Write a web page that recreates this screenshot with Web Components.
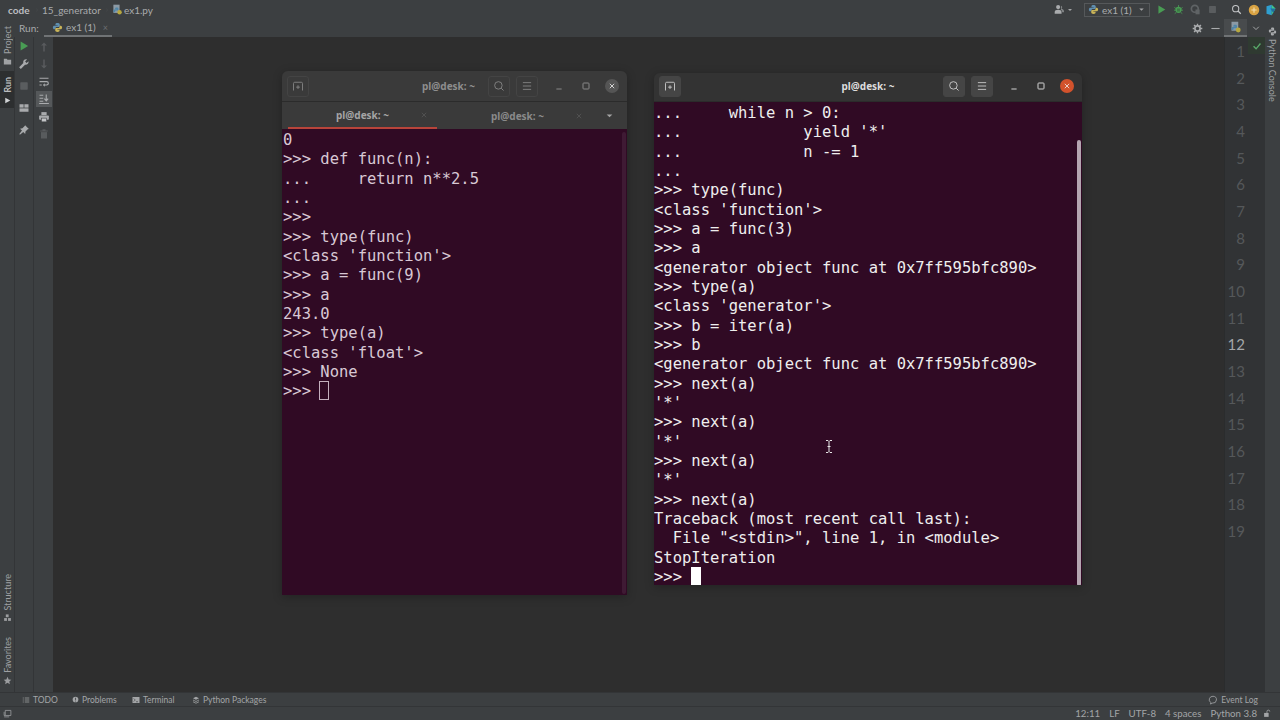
<!DOCTYPE html>
<html>
<head>
<meta charset="utf-8">
<title>code - ex1.py</title>
<style>
  html, body { margin: 0; width: 1280px; height: 720px; overflow: hidden; background: #2e2e2e; }
</style>
</head>
<body>
<ide-app></ide-app>

<script>
const ICONS = {
  python: `<path d="M8 1.500c-2.400 0-3 .9-3 2v1.300h3.200v.6H3.400C2.200 5.400 1.300 6.400 1.300 8s.9 2.700 2 2.700H5V9.200c0-1 .9-1.900 2-1.900h2.700c1 0 1.600-.8 1.600-1.700V3.500c0-1.200-1.300-2-3.300-2z" fill="#5f8fb0"/><path d="M8 14.500c2.400 0 3-.9 3-2v-1.300H7.800v-.6h4.800c1.200 0 2.100-1 2.100-2.600s-.9-2.700-2-2.700H11v1.500c0 1-.9 1.900-2 1.900H6.300c-1 0-1.600.8-1.600 1.700v2.100c0 1.200 1.300 2 3.300 2z" fill="#c9b458"/>`,
  pyfile: `<rect x="2" y="1" width="9" height="12" fill="#8c9aa5"/><path d="M7 5c-2 0-2.500.7-2.500 1.500v1H7v.5H3.500C2.500 8 2 8.800 2 10s.5 2 1.500 2h1v-1.200c0-.8.7-1.300 1.500-1.300h2c.8 0 1.300-.6 1.300-1.300V6.500C9.300 5.500 8.500 5 7 5z" fill="#4f86a8"/><circle cx="11" cy="12" r="3.200" fill="#b7a83f"/>`,
  play: `<path d="M3.500 2v12l10-6z" fill="#499c54"/>`,
  bug: `<circle cx="8" cy="8.500" r="4.500" fill="#499c54"/><path d="M8 1.500v3M2 5l3 2M14 5l-3 2M1.500 9h3M14.500 9h-3M2.500 14l2.500-2M13.500 14l-2.500-2" stroke="#499c54" stroke-width="1.200"/><path d="M5.800 7.500h4.400M5.800 10h4.400" stroke="#2f4a33" stroke-width="1"/>`,
  cover: `<circle cx="7" cy="7" r="5" fill="none" stroke="#5f6365" stroke-width="2.500"/><rect x="8" y="8" width="6" height="7" fill="#5f6365"/>`,
  stop: `<rect x="3" y="3" width="10" height="10" rx="1" fill="#5a5d5f"/>`,
  search: `<circle cx="6.800" cy="6.800" r="4.500" fill="none" stroke="#c5c7c9" stroke-width="1.500"/><path d="M10.200 10.200l4 4" stroke="#c5c7c9" stroke-width="1.800"/>`,
  update: `<circle cx="8" cy="8" r="7" fill="#d9a343"/><path d="M8 4.500v7M4.500 8h7" stroke="#f3dfb0" stroke-width="1.500"/>`,
  toolbox: `<path d="M2 3l7-2v14l-7-2z" fill="#2f9fd0"/><path d="M9 1l5 5-5 9z" fill="#3fc98c"/><path d="M7 6l7 0-3 6z" fill="#1f6f9f"/>`,
  user: `<circle cx="6" cy="4.500" r="3" fill="#a9abad"/><path d="M1 14v-2.500c0-2 2-3 5-3s5 1 5 3V14z" fill="#a9abad"/><path d="M10.500 2.500a2.500 2.500 0 010 4.500c2 .4 4 1.300 4 3.500V12H12c0-1.500-.6-2.600-2-3.500z" fill="#85888a"/>`,
  caret: `<path d="M4 6l4 4 4-4z" fill="#a3a5a7"/>`,
  sep: `<path d="M6 2l4 6-4 6" stroke="#55585a" stroke-width="1" fill="none"/>`,
  wrench: `<path d="M14 4.200l-2.600 2.300-1.900-1.900L12 2c-2-.8-4.500.3-5 2.500-.2.800-.1 1.500.1 2.100L1.500 12.200l2.300 2.300 5.600-5.600c2.500.7 5.300-1.500 4.600-4.700z" fill="#a9abad"/>`,
  layout: `<rect x="2" y="3" width="5.500" height="4.500" fill="#a9abad"/><rect x="8.500" y="3" width="5.500" height="4.500" fill="#a9abad"/><rect x="2" y="8.500" width="12" height="4.500" fill="#a9abad"/>`,
  pin: `<path d="M9.500 1.500l5 5-1.500.6-3 3-.4 3.200-2.600-2.600L3 14l-1 0 0-1 3.300-4.200L2.700 6.200 5.900 5.800l3-3z" fill="#a9abad"/>`,
  up: `<path d="M8 2l-4 4h3v8h2V6h3z" fill="#585b5d"/>`,
  down: `<path d="M8 14l-4-4h3V2h2v8h3z" fill="#585b5d"/>`,
  wrap: `<path d="M2 3h12M2 7.500h9.500a2.200 2.200 0 010 4.500H8M2 12h3" stroke="#a9abad" stroke-width="1.500" fill="none"/><path d="M9 9.800L6.500 12 9 14.200z" fill="#a9abad"/>`,
  scroll: `<path d="M2 3h5M2 7h5M2 11h5M1.500 14h13" stroke="#a9abad" stroke-width="1.500"/><path d="M11 2v8M8.500 7.500L11 10.500l2.500-3" stroke="#a9abad" stroke-width="1.500" fill="none"/>`,
  print: `<rect x="4.500" y="1.500" width="7" height="4" fill="#a9abad"/><rect x="1.500" y="6" width="13" height="5.500" rx="1" fill="#a9abad"/><rect x="4.500" y="9.500" width="7" height="5" fill="#c2c4c6" stroke="#3c3f41" stroke-width=".8"/>`,
  trash: `<path d="M3 4h10M6 2.500h4" stroke="#585b5d" stroke-width="1.500"/><path d="M4 5.500h8V14H4z" fill="#585b5d"/>`,
  gear: `<circle cx="8" cy="8" r="3.800" fill="none" stroke="#a9abad" stroke-width="2.400"/><path d="M8 1v2.500M8 12.500V15M1 8h2.500M12.500 8H15M3 3l1.800 1.800M11.200 11.200L13 13M13 3l-1.800 1.800M4.800 11.200L3 13" stroke="#a9abad" stroke-width="2"/>`,
  minus: `<path d="M2 8h12" stroke="#a9abad" stroke-width="1.600"/>`,
  chevron: `<path d="M3.500 6L8 10.500 12.500 6" stroke="#a3a5a7" stroke-width="1.600" fill="none"/>`,
  check: `<path d="M2.500 8.500L6.500 12.500 13.500 4" stroke="#59a869" stroke-width="2.200" fill="none"/>`,
  folder: `<path d="M1.500 3h5l1.500 2h6.500v8.500h-13z" fill="#a0a2a4"/>`,
  run: `<path d="M4 3v10l9-5z" fill="#d0d2d4"/>`,
  structure: `<rect x="5" y="2.500" width="5" height="5" fill="#9c9ea0"/><rect x="2" y="9" width="5" height="5" fill="#9c9ea0"/><rect x="9" y="9" width="5" height="5" fill="#9c9ea0"/>`,
  star: `<path d="M8 1.500l2 4.500 4.800.5-3.600 3.200 1 4.800L8 12.100l-4.200 2.400 1-4.800L1.200 6.500 6 6z" fill="#9c9ea0"/>`,
  todo: `<path d="M5.500 4h9M5.500 8h9M5.500 12h9" stroke="#a3a5a7" stroke-width="1.500"/><path d="M1.500 4h2M1.500 8h2M1.500 12h2" stroke="#a3a5a7" stroke-width="1.500"/>`,
  problems: `<circle cx="8" cy="8" r="6.500" fill="#a3a5a7"/><path d="M8 4v5M8 10.500v2" stroke="#3c3f41" stroke-width="1.800"/>`,
  terminal: `<rect x="1" y="2" width="14" height="12" fill="#a3a5a7"/><path d="M3.500 5l3 3-3 3M8 11.500h4" stroke="#3c3f41" stroke-width="1.300" fill="none"/>`,
  packages: `<path d="M8 1.500l6 3-6 3-6-3z" fill="#a3a5a7"/><path d="M2 8l6 3 6-3M2 11.500l6 3 6-3" stroke="#a3a5a7" stroke-width="1.500" fill="none"/>`,
  console: `<path d="M8 1c-2 0-2.500.8-2.500 1.700v1.100H8v.5H3.700C2.500 4.300 1.500 5.200 1.500 7s1 2.700 2 2.700H5V8.500c0-.9.800-1.700 1.800-1.700h2.500c.9 0 1.600-.7 1.600-1.500V2.700C10.900 1.700 9.800 1 8 1zM8 15c2 0 2.500-.8 2.500-1.700v-1.100H8v-.5h4.300c1.200 0 2.200-.9 2.200-2.700s-1-2.700-2-2.700H11v1.200c0 .9-.8 1.700-1.800 1.700H6.700c-.9 0-1.600.7-1.600 1.500v2.600C5.100 14.300 6.200 15 8 15z" fill="#a9abad"/>`,
  balloon: `<path d="M8 2a6 5.500 0 00-3.500 10l-.5 2.500 3-1.500A6 5.500 0 108 2z" fill="none" stroke="#a3a5a7" stroke-width="1.300"/>`,
  stripe: `<path d="M4 2.500h10v9H4zM4 11.500H2V5" fill="none" stroke="#a3a5a7" stroke-width="1.300"/><path d="M2 14h9" stroke="#a3a5a7" stroke-width="1.300"/>`,
  lock: `<rect x="2" y="7" width="8" height="7" fill="#a3a5a7"/><path d="M7 7V4.500a2.500 2.500 0 015 0" stroke="#a3a5a7" stroke-width="1.500" fill="none"/>`,
  newtab: `<path d="M2 14V4.500c0-.8.500-1.500 1.500-1.500h9c1 0 1.500.7 1.500 1.500V14" fill="none" stroke="currentColor" stroke-width="1.100"/><path d="M8 7v5M5.500 9.500h5" stroke="currentColor" stroke-width="1.100"/>`,
  termsearch: `<circle cx="7.200" cy="7.200" r="5" fill="none" stroke="currentColor" stroke-width="1.100"/><path d="M11 11l3 3" stroke="currentColor" stroke-width="1.200"/>`,
  hamburger: `<path d="M2.500 3.500h11M2.500 8h11M2.500 12.500h11" stroke="currentColor" stroke-width="1.100"/>`,
  winmin: `<path d="M4.500 12h7" stroke="currentColor" stroke-width="1.300"/>`,
  winmax: `<rect x="4" y="4" width="8" height="8" rx="1" fill="none" stroke="currentColor" stroke-width="1.300"/>`,
  tabclose: `<path d="M4.500 4.500l7 7M11.500 4.500l-7 7" stroke="currentColor" stroke-width="1.300"/>`,
  tabmenu: `<path d="M3 6h10l-5 5z" fill="currentColor"/>`
};

class IdeIcon extends HTMLElement {
  connectedCallback() {
    const size = this.getAttribute("size") || 12;
    const root = this.shadowRoot || this.attachShadow({ mode: "open" });
    root.innerHTML = `
      <style>
        :host { display: inline-flex; flex: none; width: ${size}px; height: ${size}px; }
        svg { display: block; width: 100%; height: 100%; }
      </style>
      <svg viewBox="0 0 16 16">${ICONS[this.getAttribute("name")] || ""}</svg>`;
  }
}
customElements.define("ide-icon", IdeIcon);

const navbarTemplate = document.createElement("template");
navbarTemplate.innerHTML = `
  <style>
    :host { display: flex; align-items: center; height: 19px; background: #3c3f41; color: #a9abad;
      font: 10px Lato, sans-serif; white-space: nowrap; }
    .crumbs { display: flex; align-items: center; padding-left: 8px; }
    .crumbs b { color: #bcbec0; font-weight: 700; width: 24px; }
    .crumbs span { width: 60px; }
    .crumbs ide-icon { margin-right: 1px; }
    .crumbs .sep { margin: 0 3px 0 3px; }
    .right { margin-left: auto; display: flex; align-items: center; padding-right: 3px; }
    .config { display: flex; align-items: center; gap: 3px; box-sizing: border-box; width: 66px; height: 14px; margin: 0 0 0 10px;
      border: 1px solid #55585a; padding-left: 3px; }
    .config ide-icon:last-child { margin-left: 2px; }
    .right > ide-icon { margin-left: 6px; }
  </style>
  <div class="crumbs">
    <b>code</b><ide-icon class="sep" name="sep" size="4"></ide-icon><span>15_generator</span><ide-icon class="sep" name="sep" size="4"></ide-icon><ide-icon name="pyfile" size="11"></ide-icon>ex1.py
  </div>
  <div class="right">
    <ide-icon name="user" size="11"></ide-icon><ide-icon name="caret" size="8" style="margin-left:1px"></ide-icon>
    <div class="config"><ide-icon name="python" size="11"></ide-icon>ex1 (1)<ide-icon name="caret" size="9"></ide-icon></div>
    <ide-icon name="play" size="11"></ide-icon>
    <ide-icon name="bug" size="11"></ide-icon>
    <ide-icon name="cover" size="11"></ide-icon>
    <ide-icon name="stop" size="11"></ide-icon>
    <ide-icon name="search" size="11" style="margin-left:13px"></ide-icon>
    <ide-icon name="update" size="12" style="margin-left:6px"></ide-icon>
    <ide-icon name="toolbox" size="12" style="margin-left:5px"></ide-icon>
  </div>`;
class IdeNavbar extends HTMLElement {
  constructor() {
    super();
    this.attachShadow({ mode: "open" }).appendChild(navbarTemplate.content.cloneNode(true));
  }
}
customElements.define("ide-navbar", IdeNavbar);

const stripeTemplate = document.createElement("template");
stripeTemplate.innerHTML = `
  <style>
    :host { display: flex; flex-direction: column; width: 14px; background: #3c3f41; color: #9fa1a3;
      font: 9px Lato, sans-serif; white-space: nowrap; }
    :host([side="right"]) { width: 15px; }
    .tab { display: flex; flex-direction: column; align-items: center; gap: 3px; box-sizing: border-box; }
    .tab span { writing-mode: vertical-rl; transform: rotate(180deg); }
    :host([side="right"]) .tab span { transform: none; }
    .on { background: #2d2f30; color: #d5d7d9; }
    .spacer { flex: 1; }
  </style>`;
class IdeStripe extends HTMLElement {
  constructor() {
    super();
    this.attachShadow({ mode: "open" }).appendChild(stripeTemplate.content.cloneNode(true));
    const tabs = JSON.parse(this.getAttribute("tabs"));
    tabs.forEach((t) => {
      const el = document.createElement("div");
      if (t.spacer) {
        el.className = "spacer";
      } else {
        el.className = t.on ? "tab on" : "tab";
        el.style.cssText = t.style || "";
        const icon = `<ide-icon name="${t.icon}" size="9"></ide-icon>`;
        el.innerHTML = t.iconFirst ? `${icon}<span>${t.text}</span>` : `<span>${t.text}</span>${icon}`;
      }
      this.shadowRoot.appendChild(el);
    });
  }
}
customElements.define("ide-stripe", IdeStripe);

const toolColumnTemplate = document.createElement("template");
toolColumnTemplate.innerHTML = `
  <style>
    :host { display: flex; flex-direction: column; align-items: center; box-sizing: border-box;
      width: 19px; background: #3c3f41; border-left: 1px solid #333537; }
    :host(:last-of-type) { width: 20px; }
    .on { background: #55585a; box-shadow: 0 0 0 2px #55585a; }
  </style>`;
class ToolColumn extends HTMLElement {
  constructor() {
    super();
    this.attachShadow({ mode: "open" }).appendChild(toolColumnTemplate.content.cloneNode(true));
    this.getAttribute("icons").split(" ").forEach((item) => {
      const [name, top, on] = item.split(":");
      const icon = document.createElement("ide-icon");
      icon.setAttribute("name", name);
      icon.setAttribute("size", "12");
      icon.style.marginTop = top + "px";
      if (on) icon.className = "on";
      this.shadowRoot.appendChild(icon);
    });
  }
}
customElements.define("tool-column", ToolColumn);

const gutterTemplate = document.createElement("template");
gutterTemplate.innerHTML = `
  <style>
    :host { display: block; width: 41px; box-sizing: border-box; background: #313335; border-left: 1px solid #2a2c2d;
      position: relative; padding-top: 1px; font: 15px/26.660px Lato, sans-serif; color: #55585a; text-align: right; }
    div { padding-right: 20px; }
    .cur { color: #a4a6a8; }
    .check { position: absolute; top: 0; right: 0; width: 17px; height: 17px; background: #2f3a31;
      display: flex; align-items: center; justify-content: center; padding: 0; }
  </style>`;
class IdeGutter extends HTMLElement {
  constructor() {
    super();
    this.attachShadow({ mode: "open" }).appendChild(gutterTemplate.content.cloneNode(true));
    for (let i = 1; i <= 19; i++) {
      const row = document.createElement("div");
      row.textContent = i;
      if (i === 12) row.className = "cur";
      this.shadowRoot.appendChild(row);
    }
    const check = document.createElement("div");
    check.className = "check";
    check.innerHTML = `<ide-icon name="check" size="10"></ide-icon>`;
    this.shadowRoot.appendChild(check);
  }
}
customElements.define("ide-gutter", IdeGutter);

const runHeaderTemplate = document.createElement("template");
runHeaderTemplate.innerHTML = `
  <style>
    :host { display: flex; align-items: stretch; height: 18px; background: #3c3f41; color: #a9abad;
      font: 10px Lato, sans-serif; white-space: nowrap; box-sizing: border-box; }
    .label { width: 30px; padding-left: 5px; display: flex; align-items: center; box-sizing: border-box; }
    .tab { width: 68px; display: flex; align-items: center; gap: 3px; box-sizing: border-box; padding-left: 8px;
      border-bottom: 2px solid #707375; }
    .tab i { font-style: normal; color: #6b6e70; font-size: 9px; margin-left: 4px; }
    .tools { margin-left: auto; display: flex; align-items: center; }
    .pin { width: 23px; align-self: stretch; display: flex; align-items: center; justify-content: center;
      border-bottom: 2px solid #707375; background: #484b4d; margin: 0 0 0 3px; box-sizing: border-box; }
    .chev { width: 18px; display: flex; justify-content: center; }
    .tools > ide-icon + ide-icon { margin-left: 7px; }
  </style>
  <div class="label">Run:</div>
  <div class="tab"><ide-icon name="python" size="11"></ide-icon>ex1 (1)<i>×</i></div>
  <div class="tools">
    <ide-icon name="gear" size="11"></ide-icon>
    <ide-icon name="minus" size="11"></ide-icon>
    <div class="pin"><ide-icon name="pyfile" size="12"></ide-icon></div>
    <div class="chev"><ide-icon name="chevron" size="10"></ide-icon></div>
  </div>`;
class RunHeader extends HTMLElement {
  constructor() {
    super();
    this.attachShadow({ mode: "open" }).appendChild(runHeaderTemplate.content.cloneNode(true));
  }
}
customElements.define("run-header", RunHeader);

const bottomTemplate = document.createElement("template");
bottomTemplate.innerHTML = `
  <style>
    :host { display: block; background: #3c3f41; color: #a3a5a7; font: 8.500px Lato, sans-serif; white-space: nowrap; }
    .row { display: flex; align-items: center; box-sizing: border-box; }
    .tools { padding-left: 22px; border-bottom: 1px solid #333537; height: 15px; border-top: 1px solid #333537; }
    .item { display: flex; align-items: center; gap: 3px; }
    .log { margin-left: auto; padding-right: 22px; display: flex; align-items: center; gap: 3px; }
    .status { height: 13px; padding: 0 0 1px 3px; font-size: 9.700px; }
    .status span { margin-left: 9px; }
    .status .first { margin-left: auto; }
    .status ide-icon { margin: 0 8px 0 6px; }
  </style>
  <div class="row tools">
    <div class="item" style="width:50px"><ide-icon name="todo" size="8"></ide-icon>TODO</div>
    <div class="item" style="width:60px"><ide-icon name="problems" size="7"></ide-icon>Problems</div>
    <div class="item" style="width:60px"><ide-icon name="terminal" size="8"></ide-icon>Terminal</div>
    <div class="item"><ide-icon name="packages" size="8"></ide-icon>Python Packages</div>
    <div class="log"><ide-icon name="balloon" size="10"></ide-icon>Event Log</div>
  </div>
  <div class="row status">
    <ide-icon name="stripe" size="9" style="margin:0"></ide-icon>
    <span class="first">12:11</span><span>LF</span><span>UTF-8</span><span>4 spaces</span><span>Python 3.8</span>
    <ide-icon name="lock" size="9"></ide-icon>
  </div>`;
class IdeBottom extends HTMLElement {
  constructor() {
    super();
    this.attachShadow({ mode: "open" }).appendChild(bottomTemplate.content.cloneNode(true));
  }
}
customElements.define("ide-bottom", IdeBottom);

const termTemplate = document.createElement("template");
termTemplate.innerHTML = `
  <style>
    :host { position: absolute; display: flex; flex-direction: column; box-sizing: border-box;
      box-shadow: 0 2px 10px rgba(0,0,0,.25); border-radius: 6px 6px 0 0; overflow: hidden;
      font-family: "Noto Sans", sans-serif; }
    .title { display: flex; align-items: center; flex: none; background: var(--title-bg); color: var(--title-fg);
      font-size: 10px; font-weight: 700; position: relative; padding: 0 8px var(--title-pb, 0) 5px; box-sizing: border-box;
      border-bottom: 1px solid #2b2b2b; }
    .title .name { position: absolute; left: 0; right: var(--name-shift, 0); text-align: center; }
    .btn { width: 22px; height: 21px; border-radius: 3px; background: var(--btn-bg); color: var(--icon-fg);
      display: flex; align-items: center; justify-content: center; position: relative; border: 1px solid var(--btn-bd); box-sizing: border-box; }
    .ctl { color: var(--icon-fg); width: 27px; display: flex; justify-content: center; position: relative; }
    .close { width: 14px; height: 14px; border-radius: 50%; background: var(--close-bg); color: #eee; display: flex;
      align-items: center; justify-content: center; position: relative; margin-left: 6px; }
    .spacer { flex: 1; }
    .tabs { display: flex; align-items: stretch; height: 27px; background: #3a3a3a; flex: none; color: #8a8a8a;
      font-size: 10px; font-weight: 700; }
    .tabs[hidden] { display: none; }
    .tab { display: flex; align-items: center; justify-content: center; position: relative; box-sizing: border-box; }
    .tab.on { color: #a5a5a5; width: 149px; margin-left: 6px; border-bottom: 2px solid #b8443a; }
    .tab ide-icon { position: absolute; right: 8px; color: #555; }
    .tabmenu { width: 35px; display: flex; align-items: center; justify-content: center; color: #a5a5a5; }
    .body { flex: 1; background: #300a24; position: relative; }
    pre { margin: 0; font: 15.500px/19.330px "DejaVu Sans Mono", monospace; color: var(--text); white-space: pre; }
    .bar { position: absolute; border-radius: 2px; width: 4px; right: 1px; bottom: 1px; background: var(--bar); }
    .cursor { position: absolute; width: 10px; height: 19px; box-sizing: border-box; }
  </style>
  <div class="title">
    <div class="btn"><ide-icon name="newtab" size="12"></ide-icon></div>
    <div class="name"></div>
    <div class="spacer"></div>
    <div class="btn" style="margin-right:6px"><ide-icon name="termsearch" size="12"></ide-icon></div>
    <div class="btn" style="margin-right:7px"><ide-icon name="hamburger" size="12"></ide-icon></div>
    <div class="ctl"><ide-icon name="winmin" size="12"></ide-icon></div>
    <div class="ctl"><ide-icon name="winmax" size="12"></ide-icon></div>
    <div class="close"><ide-icon name="tabclose" size="10"></ide-icon></div>
  </div>
  <div class="tabs" hidden></div>
  <div class="body"><pre><slot></slot></pre><div class="bar"></div><div class="cursor"></div></div>`;
class TermWindow extends HTMLElement {
  constructor() {
    super();
    this.attachShadow({ mode: "open" }).appendChild(termTemplate.content.cloneNode(true));
  }
  connectedCallback() {
    const root = this.shadowRoot;
    const name = this.getAttribute("title-text");
    root.querySelector(".name").textContent = name;
    root.querySelector(".title").style.height = this.getAttribute("bar") + "px";
    if (this.hasAttribute("tabs")) {
      const tabs = root.querySelector(".tabs");
      tabs.hidden = false;
      tabs.innerHTML = `
        <div class="tab on">${name}<ide-icon name="tabclose" size="10"></ide-icon></div>
        <div class="tab" style="width:155px;padding-left:6px">${name}<ide-icon name="tabclose" size="10"></ide-icon></div>
        <div class="tabmenu"><ide-icon name="tabmenu" size="9"></ide-icon></div>`;
    }
    const pre = root.querySelector(".body pre");
    pre.style.paddingTop = (this.getAttribute("pad") || 0) + "px";
    pre.style.paddingLeft = (this.getAttribute("pad-left") || 0) + "px";
    root.querySelector(".bar").style.top = (this.getAttribute("bar-top") || 0) + "px";
    const cur = root.querySelector(".cursor");
    const [x, y] = this.getAttribute("cursor").split(",");
    cur.style.left = x + "px";
    cur.style.top = y + "px";
    if (this.hasAttribute("hollow")) {
      cur.style.border = "1px solid #c4b0be";
    } else {
      cur.style.background = "#fff";
    }
  }
}
customElements.define("term-window", TermWindow);

const appTemplate = document.createElement("template");
appTemplate.innerHTML = `
  <style>
    :host { display: flex; flex-direction: column; width: 1280px; height: 720px; background: #2e2e2e; position: relative; overflow: hidden; }
    .main { flex: 1; display: flex; min-height: 0; }
    .center { flex: 1; display: flex; flex-direction: column; min-width: 0; }
    .work { flex: 1; display: flex; min-height: 0; }
    .canvas { flex: 1; background: #2e2e2e; }
    .beam { position: absolute; left: 825px; top: 440px; }
  </style>
  <ide-navbar></ide-navbar>
  <div class="main">
    <ide-stripe side="left" tabs='[
      {"text":"Project","icon":"folder","style":"padding-top:7px;height:45px"},
      {"text":"Run","icon":"run","on":true,"style":"padding-top:6px;height:37px;margin-top:7px"},
      {"spacer":true},
      {"text":"Structure","icon":"structure","style":"padding-bottom:15px"},
      {"text":"Favorites","icon":"star","style":"padding-bottom:7px"}]'></ide-stripe>
    <div class="center">
      <run-header></run-header>
      <div class="work">
        <tool-column icons="play:3 wrench:6 stop:10 layout:10 pin:10"></tool-column>
        <tool-column icons="up:4 down:5 wrap:6 scroll:5:on print:6 trash:5"></tool-column>
        <div class="canvas"></div>
        <ide-gutter></ide-gutter>
      </div>
    </div>
    <ide-stripe side="right" tabs='[{"text":"Python Console","icon":"console","iconFirst":true,"style":"padding-top:8px"}]'></ide-stripe>
  </div>
  <ide-bottom></ide-bottom>
  <slot></slot>
  <svg class="beam" width="8" height="13" viewBox="0 0 8 13"><path d="M1 .5h2l1 1 1-1h2M4 1.500v10M1 12.500h2l1-1 1 1h2M2.500 6.500h3" stroke="#e8e8e8" fill="none"/></svg>`;
class IdeApp extends HTMLElement {
  constructor() {
    super();
    this.attachShadow({ mode: "open" }).appendChild(appTemplate.content.cloneNode(true));
  }
}
customElements.define("ide-app", IdeApp);

const leftText = `0
>>> def func(n):
...     return n**2.5
... 
>>> 
>>> type(func)
<class 'function'>
>>> a = func(9)
>>> a
243.0
>>> type(a)
<class 'float'>
>>> None
>>> `;

const rightText = `...     while n > 0:
...             yield '*'
...             n -= 1
... 
>>> type(func)
<class 'function'>
>>> a = func(3)
>>> a
<generator object func at 0x7ff595bfc890>
>>> type(a)
<class 'generator'>
>>> b = iter(a)
>>> b
<generator object func at 0x7ff595bfc890>
>>> next(a)
'*'
>>> next(a)
'*'
>>> next(a)
'*'
>>> next(a)
Traceback (most recent call last):
  File "<stdin>", line 1, in <module>
StopIteration
>>> `;

const makeWindow = (text, attrs, vars) => {
  const win = document.createElement("term-window");
  Object.entries(attrs).forEach(([k, v]) => win.setAttribute(k, v));
  win.style.cssText = vars;
  win.textContent = text;
  return win;
};

const app = document.querySelector("ide-app");
app.appendChild(makeWindow(leftText,
  { "title-text": "pl@desk: ~", tabs: "", bar: 31, pad: 2, "pad-left": 1, "bar-top": 3, cursor: "37,252", hollow: "" },
  `left:282px;top:71px;width:345px;height:524px;--title-bg:#3a3a3a;--title-fg:#8e8e8e;--btn-bg:#3a3a3a;--btn-bd:#444;
   --icon-fg:#8c8c8c;--close-bg:#555;--text:#d8c8d4;--bar:#3f1a34;--name-shift:12px;`));
app.appendChild(makeWindow(rightText,
  { "title-text": "pl@desk: ~", bar: 29, pad: 2, "bar-top": 38, cursor: "37,465" },
  `left:654px;top:73px;width:428px;height:512px;--title-bg:#333333;--title-fg:#dcdcdc;--btn-bg:#454545;--btn-bd:#454545;
   --icon-fg:#d8d8d8;--close-bg:#d2522c;--text:#eeeeee;--bar:#b5a5b1;--title-pb:2px;`));
</script>
</body>
</html>
